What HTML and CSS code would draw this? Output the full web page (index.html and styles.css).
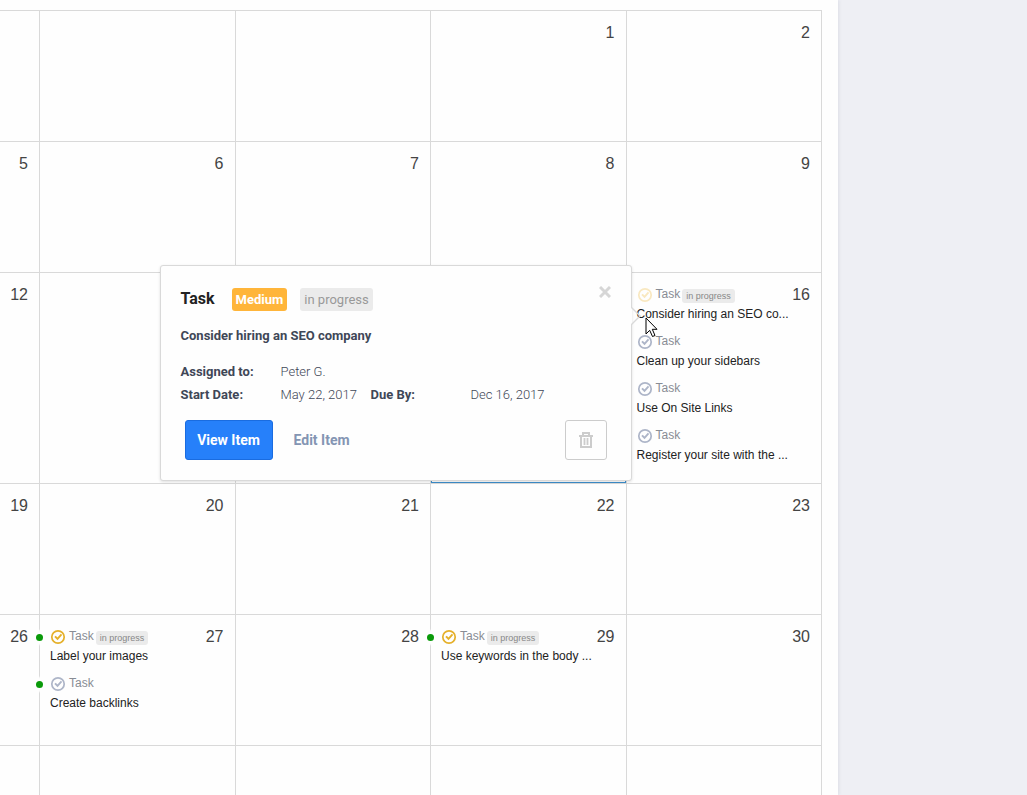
FILE: index.html
```html
<!DOCTYPE html>
<html lang="en">
<head>
    <meta charset="utf-8">
    <title>Calendar</title>
    <link rel="stylesheet" href="styles.css">
</head>
<body>
    <svg class="symbols" width="0" height="0" aria-hidden="true">
        <symbol id="check" viewBox="0 0 16 16">
            <circle cx="8" cy="8" r="6.2" fill="none" stroke="currentColor" stroke-width="1.7"/>
            <path d="M5 7.4l2.5 2.4 4-4.4" fill="none" stroke="currentColor" stroke-width="1.9"/>
        </symbol>
    </svg>

    <div class="page">
        <main class="panel">
            <table class="calendar">
                <tr>
                    <td></td>
                    <td></td>
                    <td></td>
                    <td><div class="day"><span class="date">1</span></div></td>
                    <td><div class="day"><span class="date">2</span></div></td>
                </tr>
                <tr>
                    <td><div class="day"><span class="date">5</span></div></td>
                    <td><div class="day"><span class="date">6</span></div></td>
                    <td><div class="day"><span class="date">7</span></div></td>
                    <td><div class="day"><span class="date">8</span></div></td>
                    <td><div class="day"><span class="date">9</span></div></td>
                </tr>
                <tr>
                    <td><div class="day"><span class="date">12</span></div></td>
                    <td></td>
                    <td></td>
                    <td class="today"></td>
                    <td>
                        <div class="day">
                            <ul class="tasks">
                                <li class="task">
                                    <div class="task-head">
                                        <svg class="check faded"><use href="#check"/></svg>
                                        <span>Task</span>
                                        <span class="status">in progress</span>
                                    </div>
                                    <div class="task-title">Consider hiring an SEO co...</div>
                                </li>
                                <li class="task">
                                    <div class="task-head">
                                        <svg class="check"><use href="#check"/></svg>
                                        <span>Task</span>
                                    </div>
                                    <div class="task-title">Clean up your sidebars</div>
                                </li>
                                <li class="task">
                                    <div class="task-head">
                                        <svg class="check"><use href="#check"/></svg>
                                        <span>Task</span>
                                    </div>
                                    <div class="task-title">Use On Site Links</div>
                                </li>
                                <li class="task">
                                    <div class="task-head">
                                        <svg class="check"><use href="#check"/></svg>
                                        <span>Task</span>
                                    </div>
                                    <div class="task-title">Register your site with the ...</div>
                                </li>
                            </ul>
                            <span class="date">16</span>
                        </div>

                        <div class="popover">
                            <div class="popover-head">
                                <h2>Task</h2>
                                <span class="label medium">Medium</span>
                                <span class="label">in progress</span>
                                <button class="close" type="button" aria-label="Close">
                                    <svg width="12" height="12" viewBox="0 0 12 12"><path d="M1 1l10 10M11 1L1 11" stroke="currentColor" stroke-width="3"/></svg>
                                </button>
                            </div>
                            <h3>Consider hiring an SEO company</h3>
                            <dl class="details">
                                <dt>Assigned to:</dt>
                                <dd class="wide">Peter G.</dd>
                                <dt>Start Date:</dt>
                                <dd>May 22, 2017</dd>
                                <dt>Due By:</dt>
                                <dd>Dec 16, 2017</dd>
                            </dl>
                            <div class="actions">
                                <button class="btn primary" type="button">View Item</button>
                                <button class="btn link" type="button">Edit Item</button>
                                <button class="btn trash" type="button" aria-label="Delete">
                                    <svg width="14" height="16" viewBox="0 0 14 16" fill="none" stroke="currentColor">
                                        <path d="M4 3.500V1h6v2.500" stroke-width="2"/>
                                        <path d="M0 4h14" stroke-width="2"/>
                                        <path d="M2 4v11h10V4" stroke-width="2"/>
                                        <path d="M5.500 6v7M8.500 6v7" stroke-width="1.8"/>
                                    </svg>
                                </button>
                            </div>
                            <svg class="arrow" width="10" height="18" viewBox="0 0 10 18">
                                <path d="M0 1h1v16H0z" fill="#fefefe"/>
                                <path d="M0.500 0.500L9 9 0.500 17.500" fill="none" stroke="#d9d9d9" stroke-width="1.4"/>
                            </svg>
                        </div>

                        <svg class="cursor" width="13" height="21" viewBox="0 0 13 21">
                            <path d="M1 1v16l3.700-3.700L7.500 19.500l2.500-1-2.700-6.200H12z" fill="#fff" stroke="#000"/>
                        </svg>
                    </td>
                </tr>
                <tr>
                    <td><div class="day"><span class="date">19</span></div></td>
                    <td><div class="day"><span class="date">20</span></div></td>
                    <td><div class="day"><span class="date">21</span></div></td>
                    <td><div class="day"><span class="date">22</span></div></td>
                    <td><div class="day"><span class="date">23</span></div></td>
                </tr>
                <tr>
                    <td><div class="day"><span class="date">26</span></div></td>
                    <td>
                        <div class="day">
                            <ul class="tasks">
                                <li class="task dot">
                                    <div class="task-head">
                                        <svg class="check active"><use href="#check"/></svg>
                                        <span>Task</span>
                                        <span class="status">in progress</span>
                                    </div>
                                    <div class="task-title">Label your images</div>
                                </li>
                                <li class="task dot">
                                    <div class="task-head">
                                        <svg class="check"><use href="#check"/></svg>
                                        <span>Task</span>
                                    </div>
                                    <div class="task-title">Create backlinks</div>
                                </li>
                            </ul>
                            <span class="date">27</span>
                        </div>
                    </td>
                    <td><div class="day"><span class="date">28</span></div></td>
                    <td>
                        <div class="day">
                            <ul class="tasks">
                                <li class="task dot">
                                    <div class="task-head">
                                        <svg class="check active"><use href="#check"/></svg>
                                        <span>Task</span>
                                        <span class="status">in progress</span>
                                    </div>
                                    <div class="task-title">Use keywords in the body ...</div>
                                </li>
                            </ul>
                            <span class="date">29</span>
                        </div>
                    </td>
                    <td><div class="day"><span class="date">30</span></div></td>
                </tr>
                <tr>
                    <td></td>
                    <td></td>
                    <td></td>
                    <td></td>
                    <td></td>
                </tr>
            </table>
        </main>
        <aside class="side"></aside>
    </div>
</body>
</html>
```
FILE: styles.css
```css
* {
    box-sizing: border-box;
}

body {
    margin: 0;
    background-color: #eeeff4;
    font-family: "Liberation Sans", Arial, sans-serif;
    font-size: 12px;
    color: #222;
}

.symbols {
    position: absolute;
}

.page {
    display: flex;
    height: 100vh;
    overflow: hidden;
}

.panel {
    flex: 1;
    min-width: 0;
    padding: 10px 16px 0 0;
    background-color: #fefefe;
    box-shadow: 0 0 4px rgba(60, 70, 110, 0.15);
}

.side {
    width: 189px;
}

/* calendar grid */
.calendar {
    width: 100%;
    table-layout: fixed;
    border-collapse: separate;
    border-spacing: 0;
    border-top: 1px solid #d9d9d9;
}

.calendar td {
    position: relative;
    height: 131px;
    padding: 0;
    vertical-align: top;
    border-right: 1px solid #d9d9d9;
    border-bottom: 1px solid #d9d9d9;
}

.calendar td:first-child {
    width: 40px;
}

.calendar td.today {
    box-shadow: inset 0 0 0 1px #3d8fcc;
}

.day {
    display: flex;
    padding: 12px 11px 10px 10px;
}

.date {
    margin-left: auto;
    font-size: 16px;
    line-height: 20px;
    color: #444;
}

/* tasks */
.tasks {
    flex: 1;
    min-width: 0;
    margin: 0;
    padding: 0;
    list-style: none;
}

.task {
    position: relative;
    height: 47px;
}

.task-head {
    display: flex;
    align-items: center;
    height: 19px;
    line-height: 19px;
    color: #888c94;
}

.task-title {
    line-height: 20px;
    white-space: nowrap;
}

.check {
    width: 16px;
    height: 16px;
    margin-right: 3px;
    color: #adb5c8;
}

.check.active {
    color: #e5b02a;
}

.check.faded {
    color: #f9e8c0;
}

.status {
    margin: 2px 0 0 2px;
    padding: 0 4px;
    border-radius: 3px;
    background-color: #ebebeb;
    color: #888;
    font-size: 9px;
    line-height: 14px;
}

.dot::before {
    content: "";
    position: absolute;
    top: 7px;
    left: -14px;
    width: 7px;
    height: 7px;
    border-radius: 50%;
    background-color: #0a9a0a;
    box-shadow: 0 0 2px 4px #fefefe;
}

/* popover */
.popover {
    position: absolute;
    z-index: 1;
    top: -8px;
    right: 100%;
    width: 472px;
    margin-right: -5px;
    padding: 20px;
    border: 1px solid #d9d9d9;
    border-radius: 3px;
    background-color: #fefefe;
    box-shadow: 0 1px 3px rgba(0, 0, 0, 0.12);
    font-family: Roboto, sans-serif;
    font-size: 13px;
    color: #3f4757;
}

.popover-head {
    display: flex;
    align-items: center;
    height: 26px;
}

.popover h2 {
    margin: 0 17px 0 0;
    font-size: 16px;
    line-height: 24px;
    font-weight: 700;
    color: #222;
}

.label {
    margin-right: 13px;
    padding: 0 4px;
    border-radius: 3px;
    background-color: #ebebeb;
    color: #999;
    line-height: 23px;
}

.label.medium {
    background-color: #ffb53a;
    color: #fff;
    font-weight: 700;
}

.close {
    display: flex;
    align-self: flex-start;
    margin-left: auto;
    padding: 0;
    border: none;
    background: none;
    color: #d6d6d6;
    cursor: pointer;
}

.popover h3 {
    margin: 14px 0;
    font-size: 13px;
    line-height: 20px;
    font-weight: 700;
}

.details {
    display: grid;
    grid-template-columns: 100px 90px 100px 1fr;
    margin: 0;
    line-height: 23px;
}

.details dt {
    font-weight: 700;
}

.details dd {
    margin: 0;
    font-weight: 300;
}

.details .wide {
    grid-column: span 3;
}

.actions {
    display: flex;
    padding: 14px 4px 0;
}

.btn {
    height: 40px;
    border: 1px solid transparent;
    border-radius: 3px;
    background: none;
    font-family: Roboto, sans-serif;
    font-size: 14px;
    font-weight: 700;
    cursor: pointer;
}

.btn.primary {
    width: 88px;
    padding: 0;
    border-color: #1a6ce0;
    background-color: #2680fa;
    color: #fff;
}

.btn.link {
    padding: 0 20px;
    color: #8495b3;
}

.btn.trash {
    display: flex;
    align-items: center;
    justify-content: center;
    width: 42px;
    margin-left: auto;
    border-color: #ccc;
    color: #ccc;
}

.arrow {
    position: absolute;
    top: 41px;
    right: -10px;
}

.cursor {
    position: absolute;
    z-index: 2;
    top: 44px;
    left: 18px;
}
```
